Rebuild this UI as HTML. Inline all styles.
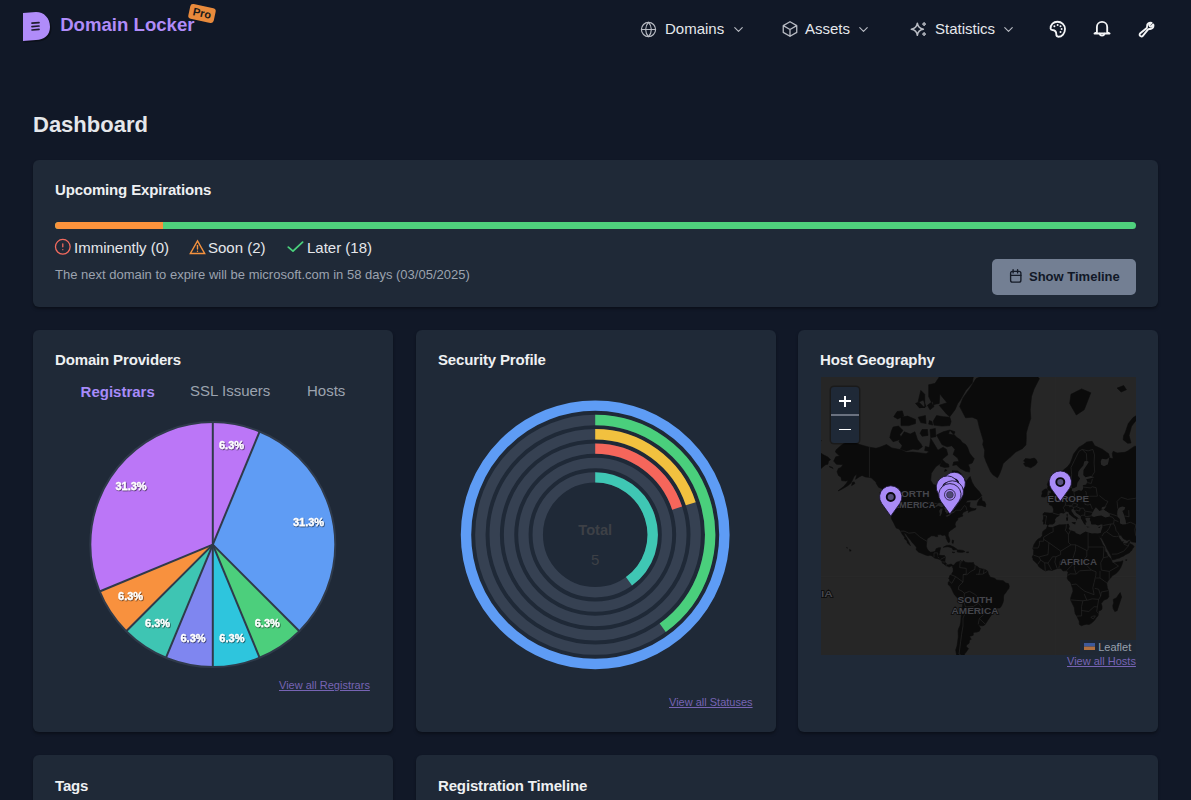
<!DOCTYPE html>
<html><head><meta charset="utf-8">
<style>
*{margin:0;padding:0;box-sizing:border-box}
html,body{width:1191px;height:800px;overflow:hidden;background:#111827;font-family:"Liberation Sans",sans-serif;color:#e5e7eb}
.a{position:absolute;white-space:nowrap}
.card{position:absolute;background:#1f2937;border-radius:6px;box-shadow:0 2px 3px rgba(0,0,0,.35)}
.t{font-size:15px;font-weight:700;color:#eef0f2;line-height:17px;letter-spacing:-.15px}
svg.i{position:absolute;fill:none;stroke:currentColor;stroke-width:2;stroke-linecap:round;stroke-linejoin:round}
.pl{font-size:11px;font-weight:700;fill:#fff;stroke:#fff;stroke-width:.3px;filter:url(#ds);font-family:"Liberation Sans",sans-serif}
.ml{font-size:9.8px;font-weight:700;fill:#44454b;paint-order:stroke;stroke:#0b0b0b;stroke-width:1.5px;font-family:"Liberation Sans",sans-serif}
.link{font-size:11px;color:#7764b4;text-decoration:underline;line-height:13px}
</style></head><body>

<!-- header -->
<svg class="a" style="left:20px;top:8px" width="34" height="36" viewBox="0 0 34 36">
  <path d="M3 5 L16 4 C24 4 30 10 30 19 C30 27 24 32 16 32 L3 33 Z" fill="#000" opacity=".35" transform="translate(1.5,1.5)"/>
  <path d="M3 5 L16 4 C24 4 30 10 30 19 C30 27 24 32 16 32 L3 33 Z" fill="#b08cf9"/>
  <path d="M12 15.2 L19 14.6 M12 18.6 L19 18 M12 22 L19 21.4" stroke="#1f1b2e" stroke-width="1.7" stroke-linecap="round"/>
</svg>
<div class="a" style="left:60.2px;top:13.5px;font-size:18.6px;font-weight:700;color:#b08cf9;line-height:22px">Domain Locker</div>
<div class="a" style="left:189.3px;top:6px;width:26px;height:15px;background:#e98a3c;border-radius:3px;transform:rotate(12deg);font-size:11px;font-weight:700;color:#1a1a1a;line-height:15px;text-align:center">Pro</div>

<div id="nav" style="color:#e5e7eb">
<svg class="i" style="left:639.7px;top:21px;color:#b9bcc4;stroke-width:1.6" width="17" height="17" viewBox="0 0 24 24"><circle cx="12" cy="12" r="10"/><path d="M12 2a14.5 14.5 0 0 0 0 20 14.5 14.5 0 0 0 0-20"/><path d="M2 12h20"/></svg>
<div class="a" style="left:665px;top:20px;font-size:15px;line-height:17px">Domains</div>
<svg class="i" style="left:731px;top:22px;color:#b9bcc4;stroke-width:1.8" width="15" height="15" viewBox="0 0 24 24"><path d="m6 9 6 6 6-6"/></svg>

<svg class="i" style="left:781px;top:20px;color:#b9bcc4;stroke-width:1.7;stroke-linejoin:round" width="18" height="18" viewBox="0 0 24 24"><path d="m21 7.5-9-5.25L3 7.5m18 0-9 5.25m9-5.25v9l-9 5.25M3 7.5l9 5.25M3 7.5v9l9 5.25m0-9v9"/></svg>
<div class="a" style="left:805px;top:20px;font-size:15px;line-height:17px">Assets</div>
<svg class="i" style="left:856px;top:22px;color:#b9bcc4;stroke-width:1.8" width="15" height="15" viewBox="0 0 24 24"><path d="m6 9 6 6 6-6"/></svg>

<svg class="a" style="left:905px;top:15px" width="30" height="28" viewBox="0 0 30 28" fill="none" stroke="#b9bcc4" stroke-width="1.5" stroke-linejoin="round"><path d="M12.35 8.2Q13.1 13.5 18.4 14.25Q13.1 15 12.35 20.3Q11.6 15 6.3 14.25Q11.6 13.5 12.35 8.2Z"/><path d="M19.1 7.3Q19.4 8.8 20.9 9.1Q19.4 9.4 19.1 10.9Q18.8 9.4 17.3 9.1Q18.8 8.8 19.1 7.3Z" fill="#b9bcc4" stroke-width=".9"/><path d="M19.1 17.3Q19.4 18.8 20.9 19.1Q19.4 19.4 19.1 20.9Q18.8 19.4 17.3 19.1Q18.8 18.8 19.1 17.3Z" fill="#b9bcc4" stroke-width=".9"/></svg>
<div class="a" style="left:935px;top:20px;font-size:15px;line-height:17px">Statistics</div>
<svg class="i" style="left:1001px;top:22px;color:#b9bcc4;stroke-width:1.8" width="15" height="15" viewBox="0 0 24 24"><path d="m6 9 6 6 6-6"/></svg>

<svg class="a" style="left:1045px;top:17px" width="25" height="23" viewBox="0 0 25 23" fill="none" stroke="#f3f4f6" stroke-width="1.85" stroke-linejoin="round"><path d="M5.6 11.6C5.4 7.6 8.5 4.7 12.4 4.7C16.7 4.7 20 8 20 12.1C20 16.4 17 19.7 13.3 19.7C11.9 19.7 11.3 18.7 11.3 17.3C11.3 14.6 9.6 13.1 7.5 13C6.4 12.9 5.7 12.4 5.6 11.6Z"/><g fill="#f3f4f6" stroke="none"><circle cx="9.4" cy="9.2" r="1"/><circle cx="12.6" cy="8" r="1"/><circle cx="15.5" cy="9.3" r="1"/><circle cx="16.6" cy="12.1" r="1"/><circle cx="15.5" cy="15" r="1"/></g></svg>
<svg class="a" style="left:1090px;top:17px" width="25" height="23" viewBox="0 0 25 23" fill="none" stroke="#f3f4f6" stroke-width="1.85" stroke-linejoin="round" stroke-linecap="round"><path d="M6.9 15V9.9C6.9 7 9.2 4.9 12.05 4.9C14.9 4.9 17.2 7 17.2 9.9V15L19.6 16.5H4.5Z"/><path d="M9.7 16.7A2.4 2.4 0 0 0 14.4 16.7"/></svg>
<svg class="i" style="left:1138.2px;top:20.8px;color:#f3f4f6;stroke-width:2.6" width="17.1" height="17.1" viewBox="0 0 24 24"><path d="M21.75 6.75a4.5 4.5 0 0 1-4.884 4.484c-1.076-.091-2.264.071-2.950.904l-7.152 8.684a2.548 2.548 0 1 1-3.586-3.586l8.684-7.152c.833-.686.995-1.874.904-2.950a4.5 4.5 0 0 1 6.336-4.486l-3.276 3.276a3.004 3.004 0 0 0 2.250 2.250l3.276-3.276c.256.58.398 1.220.398 1.890Z"/></svg>
</div>

<div class="a" style="left:33px;top:112px;font-size:22px;font-weight:700;color:#e5e7eb;line-height:25px">Dashboard</div>

<!-- card 1 -->
<div class="card" style="left:33px;top:160px;width:1125px;height:147px"></div>
<div class="a t" style="left:55px;top:181px">Upcoming Expirations</div>
<div class="a" style="left:55px;top:221.9px;width:1081px;height:7.5px;border-radius:4px;background:#4fd17d;overflow:hidden"><div style="width:108px;height:7.5px;background:#fb923c"></div></div>

<svg class="i" style="left:53.6px;top:237.9px;color:#f26a5e;stroke-width:1.75" width="17.6" height="17.6" viewBox="0 0 24 24"><circle cx="12" cy="12" r="10"/><line x1="12" x2="12" y1="8" y2="12"/><line x1="12" x2="12.01" y1="16" y2="16"/></svg>
<div class="a" style="left:74px;top:239px;font-size:15px;line-height:17px">Imminently (0)</div>
<svg class="i" style="left:189px;top:239px;color:#f5923e;stroke-width:2;stroke-linejoin:miter" width="17" height="17" viewBox="0 0 24 24"><path d="M12 2.6L22.1 20.4H1.9Z"/><path d="M12 9.2v5"/><path d="M12 17.3h.01"/></svg>
<div class="a" style="left:208px;top:239px;font-size:15px;line-height:17px">Soon (2)</div>
<svg class="a" style="left:280px;top:234px" width="30" height="26" viewBox="0 0 30 26" fill="none" stroke="#4ad07c" stroke-width="1.8" stroke-linecap="round" stroke-linejoin="round"><path d="M8.3 13.1L13 17.1L22.6 8.2"/></svg>
<div class="a" style="left:307px;top:239px;font-size:15px;line-height:17px">Later (18)</div>
<div class="a" style="left:55px;top:267px;font-size:13px;line-height:15px;color:#9ca3af">The next domain to expire will be microsoft.com in 58 days (03/05/2025)</div>

<div class="a" style="left:992px;top:259px;width:144px;height:36px;background:#737f93;border-radius:5px"></div>
<svg class="a" style="left:1003px;top:265px" width="24" height="22" viewBox="0 0 24 22" fill="none" stroke="#151b27" stroke-width="1.35" stroke-linecap="round"><rect x="7.6" y="6.3" width="10.3" height="10.8" rx="1.9"/><path d="M7.6 10.4H17.9M10.1 4.6V7.9M14.6 4.6V7.9"/></svg>
<div class="a" style="left:1029px;top:269px;font-size:13px;font-weight:700;line-height:15px;color:#111827">Show Timeline</div>

<!-- row 2 -->
<div class="card" style="left:33px;top:330px;width:360px;height:402px"></div>
<div class="card" style="left:415.5px;top:330px;width:360px;height:402px"></div>
<div class="card" style="left:798px;top:330px;width:360px;height:402px"></div>

<div class="a t" style="left:55px;top:351px">Domain Providers</div>
<div class="a" style="left:80.6px;top:382.5px;font-size:15px;font-weight:700;color:#a78bfa;line-height:17px">Registrars</div>
<div class="a" style="left:190px;top:382px;font-size:15px;color:#9ca3af;line-height:17px">SSL Issuers</div>
<div class="a" style="left:307px;top:382px;font-size:15px;color:#9ca3af;line-height:17px">Hosts</div>
<svg class="a" style="left:0;top:0" width="400" height="740" viewBox="0 0 400 740"><defs><filter id="ds" x="-20%" y="-30%" width="140%" height="160%"><feDropShadow dx="0.6" dy="0.8" stdDeviation="0.7" flood-color="#000" flood-opacity="0.75"/></filter></defs><path d="M212.80 544.60L212.80 422.10A122.5 122.5 0 0 1 259.68 431.42Z" fill="#bb76f7"/><path d="M212.80 544.60L259.68 431.42A122.5 122.5 0 0 1 299.42 631.22Z" fill="#5f9cf4"/><path d="M212.80 544.60L299.42 631.22A122.5 122.5 0 0 1 259.68 657.78Z" fill="#4ccf7c"/><path d="M212.80 544.60L259.68 657.78A122.5 122.5 0 0 1 212.80 667.10Z" fill="#2ec5dd"/><path d="M212.80 544.60L212.80 667.10A122.5 122.5 0 0 1 165.92 657.78Z" fill="#7f86f0"/><path d="M212.80 544.60L165.92 657.78A122.5 122.5 0 0 1 126.18 631.22Z" fill="#3ec5b3"/><path d="M212.80 544.60L126.18 631.22A122.5 122.5 0 0 1 99.62 591.48Z" fill="#f8913e"/><path d="M212.80 544.60L99.62 591.48A122.5 122.5 0 0 1 212.80 422.10Z" fill="#bb76f7"/><path d="M212.80 544.60L212.80 422.10" stroke="#2f3a4a" stroke-width="2"/><path d="M212.80 544.60L259.68 431.42" stroke="#2f3a4a" stroke-width="2"/><path d="M212.80 544.60L299.42 631.22" stroke="#2f3a4a" stroke-width="2"/><path d="M212.80 544.60L259.68 657.78" stroke="#2f3a4a" stroke-width="2"/><path d="M212.80 544.60L212.80 667.10" stroke="#2f3a4a" stroke-width="2"/><path d="M212.80 544.60L165.92 657.78" stroke="#2f3a4a" stroke-width="2"/><path d="M212.80 544.60L126.18 631.22" stroke="#2f3a4a" stroke-width="2"/><path d="M212.80 544.60L99.62 591.48" stroke="#2f3a4a" stroke-width="2"/><circle cx="212.8" cy="544.6" r="122.5" fill="none" stroke="#2f3a4a" stroke-width="2"/><text x="231.5" y="448.7" text-anchor="middle" class="pl">6.3%</text><text x="308.5" y="526" text-anchor="middle" class="pl">31.3%</text><text x="267.3" y="627" text-anchor="middle" class="pl">6.3%</text><text x="231.9" y="641.8" text-anchor="middle" class="pl">6.3%</text><text x="193" y="641.8" text-anchor="middle" class="pl">6.3%</text><text x="157.6" y="627" text-anchor="middle" class="pl">6.3%</text><text x="130.6" y="599.6" text-anchor="middle" class="pl">6.3%</text><text x="131" y="490.3" text-anchor="middle" class="pl">31.3%</text></svg>
<div class="a link" style="left:279px;top:679px">View all Registrars</div>

<div class="a t" style="left:438px;top:351px">Security Profile</div>
<svg class="a" style="left:0;top:0;font-family:'Liberation Sans',sans-serif" width="800" height="740" viewBox="0 0 800 740"><circle cx="595.2" cy="534.8" r="129.2" fill="none" stroke="#5e9cf5" stroke-width="10.4"/><circle cx="595.2" cy="534.8" r="114.85" fill="none" stroke="#364152" stroke-width="10.4"/><path d="M595.20 419.95A114.85 114.85 0 0 1 662.71 627.72" fill="none" stroke="#4acf7c" stroke-width="10.4"/><circle cx="595.2" cy="534.8" r="100.5" fill="none" stroke="#364152" stroke-width="10.4"/><path d="M595.20 434.30A100.5 100.5 0 0 1 690.78 503.74" fill="none" stroke="#f2c13f" stroke-width="10.4"/><circle cx="595.2" cy="534.8" r="86.15" fill="none" stroke="#364152" stroke-width="10.4"/><path d="M595.20 448.65A86.15 86.15 0 0 1 677.13 508.18" fill="none" stroke="#f6665b" stroke-width="10.4"/><circle cx="595.2" cy="534.8" r="71.8" fill="none" stroke="#364152" stroke-width="10.4"/><circle cx="595.2" cy="534.8" r="57.45" fill="none" stroke="#364152" stroke-width="10.4"/><path d="M595.20 477.35A57.45 57.45 0 0 1 628.97 581.28" fill="none" stroke="#3fc7b4" stroke-width="10.4"/><text x="595.2" y="534.8" text-anchor="middle" style="font-size:14.6px;font-weight:700;fill:#3d4046">Total</text><text x="595.2" y="564.9" text-anchor="middle" style="font-size:15px;fill:#3d4046">5</text></svg>
<div class="a link" style="left:669px;top:695.5px">View all Statuses</div>

<div class="a t" style="left:820px;top:351px">Host Geography</div>
<div class="a" style="left:820.5px;top:377.3px;width:315.5px;height:277.7px;background:#262626;overflow:hidden">
<svg width="315.5" height="277.7" style="position:absolute;left:0;top:0">
<path d="M234.2 0V277.7M0 199.7H315.5" stroke="#2b2b2b" stroke-width=".7" fill="none"/>
<path d="M82.7 39.1L76.7 41.9L72.8 39.7L76.1 34.5L81.3 33.9ZM111.6 48.1L107.7 47.1L108.4 43.5L111.0 44.5ZM105.1 29.6L98.5 30.9L94.5 26.4L102.4 23.0ZM103.7 30.9L103.7 17.3L99.8 13.4L97.2 24.4ZM109.0 32.7L106.4 28.3L111.6 24.4L113.0 29.6ZM132.7 58.0L127.5 57.1L128.8 53.0L134.0 54.8ZM126.1 93.4L123.5 94.5L124.2 92.3ZM12.7 84.1L14.8 79.8L18.7 79.1L14.4 75.0L15.2 72.8L20.7 67.9L28.0 63.5L33.9 65.5L38.5 67.5L48.4 70.2L55.0 71.3L58.9 70.2L65.5 67.5L70.8 70.9L80.0 72.8L85.3 75.3L91.9 75.0L97.2 75.7L105.1 76.7L107.7 75.0L109.7 61.4L113.0 66.7L116.9 73.2L122.2 70.2L125.5 72.4L126.8 77.8L121.5 82.1L119.6 86.6L114.9 89.6L110.3 96.2L109.7 103.4L112.3 107.6L117.6 108.8L122.2 111.9L125.7 112.8L126.1 117.0L128.1 120.9L129.8 120.3L130.4 113.7L132.5 110.7L132.1 104.6L132.1 98.9L131.1 93.7L136.7 94.0L140.6 97.0L142.6 101.6L145.2 104.6L147.9 100.8L149.2 99.5L150.9 104.9L153.2 109.0L155.8 112.1L158.4 114.8L160.7 118.6L159.1 120.5L155.1 123.0L149.2 123.0L146.6 123.4L142.6 127.8L141.3 129.4L143.9 125.8L149.2 125.4L148.8 127.4L148.5 129.4L149.9 130.9L153.8 131.8L155.1 131.3L154.5 132.8L149.9 134.1L147.2 135.4L147.9 133.5L145.9 133.5L143.9 134.6L142.0 135.4L141.2 137.5L142.0 139.0L140.0 139.7L136.7 141.1L136.7 143.0L134.7 144.7L134.0 147.2L134.7 149.9L133.0 150.9L131.4 152.3L129.4 153.6L127.5 155.5L127.1 158.2L128.1 160.8L128.8 163.0L128.4 165.2L127.2 165.4L126.4 163.8L125.2 161.5L125.1 159.4L123.5 158.1L121.5 158.5L119.6 157.6L116.3 157.8L116.7 159.6L114.9 159.6L113.0 158.8L110.3 158.8L108.4 160.2L106.1 161.8L105.7 164.9L105.3 169.3L106.1 171.7L107.7 174.1L109.7 175.3L113.0 174.7L114.3 174.2L115.1 171.7L117.6 170.8L119.6 170.7L118.9 173.5L118.5 175.9L117.8 178.1L120.9 178.5L123.5 178.6L124.4 179.7L124.0 183.1L123.9 185.1L125.1 186.5L126.8 188.1L128.8 187.4L130.1 187.1L131.9 188.3L132.2 189.4L130.9 188.9L129.0 189.4L128.1 190.1L126.8 189.3L124.8 188.7L122.6 186.7L121.1 185.9L121.3 184.8L119.2 182.6L116.3 181.7L113.6 181.1L111.0 178.9L109.0 178.2L107.0 178.7L104.4 177.9L101.1 176.5L97.8 175.2L95.2 172.8L95.4 170.3L93.9 168.3L91.2 165.4L89.9 163.5L87.3 160.5L85.3 157.5L82.9 155.5L83.7 157.9L85.6 160.8L87.3 163.9L88.6 166.8L89.4 168.7L88.6 167.8L86.3 165.9L86.0 163.8L83.6 162.0L83.7 160.3L81.6 157.8L80.3 155.5L79.8 154.2L78.0 152.0L75.3 151.1L73.7 148.0L72.8 146.0L71.1 143.0L70.4 141.4L70.0 136.8L70.8 130.9L69.9 126.6L72.1 125.4L69.5 123.2L66.2 121.3L64.9 118.1L62.2 113.7L60.9 111.4L58.3 107.8L55.6 105.4L53.7 104.1L50.4 100.8L47.7 100.3L44.4 100.0L41.1 98.4L38.5 99.7L34.6 102.3L35.9 97.0L33.2 99.2L31.3 103.4L29.9 106.1L26.7 108.8L23.4 110.7L20.1 112.6L17.0 113.9L19.4 112.1L22.7 109.5L25.3 106.4L27.3 103.4L24.7 104.1L20.7 103.6L20.1 100.3L17.4 98.4L16.1 94.8L17.4 91.4L20.1 90.5L22.0 87.5L18.7 87.5L15.4 87.2L12.7 84.1ZM176.5 100.8L172.3 98.1L169.6 94.8L167.3 89.6L165.0 84.4L163.3 79.5L163.7 73.2L161.7 67.5L162.4 63.9L160.4 57.1L158.4 50.6L156.5 42.4L151.2 40.2L144.6 40.8L138.7 29.6L142.0 20.9L148.5 11.9L155.1 1.6L168.3 -4.1L184.1 -16.9L205.2 -11.3L218.4 1.6L213.1 11.9L210.5 19.5L209.2 32.7L209.8 41.3L207.2 49.1L205.2 56.2L205.2 62.7L204.9 67.9L201.3 71.7L194.7 75.0L189.4 80.1L184.8 84.1L182.1 86.6L180.8 91.1L178.9 96.2L177.5 98.9ZM204.5 89.3L202.6 86.6L204.5 85.3L202.6 84.1L204.5 81.5L209.2 82.1L213.1 81.1L215.1 82.5L216.3 85.3L214.4 88.1L209.8 90.8L206.5 89.6ZM128.8 53.0L122.2 54.8L115.6 58.0L120.9 67.5L126.1 69.8L130.8 68.7L134.0 72.4L132.1 77.4L136.7 81.1L138.0 84.4L132.7 85.0L131.7 88.4L135.4 87.8L139.3 91.4L144.6 94.3L148.5 95.1L148.8 91.4L147.2 87.5L151.2 86.0L153.2 81.8L151.2 79.5L148.5 76.0L146.6 70.6L144.6 67.5L141.3 65.5L139.3 62.7L136.0 60.6L133.4 58.0L131.4 56.2ZM152.5 -1.2L142.0 -11.3L122.2 -6.0L114.3 6.1L118.2 15.8L120.9 19.5L126.1 25.7L118.2 28.3L125.5 36.9L128.8 39.7L134.0 32.7L136.7 26.4L139.3 23.0L144.6 13.4L151.2 6.1ZM115.6 6.1L107.7 7.8L107.7 19.5L111.6 27.7L118.2 26.4L118.9 15.8ZM128.8 48.6L120.9 49.1L113.0 48.1L112.3 44.0L115.6 38.6L122.2 39.7L128.8 40.2L130.1 44.5ZM101.4 69.8L97.2 72.8L91.9 72.1L85.3 73.9L79.4 72.1L81.3 68.7L78.0 64.7L80.0 59.7L83.3 54.8L89.2 57.1L93.9 54.8L96.5 62.7L99.8 66.7ZM80.7 61.8L76.1 63.5L72.1 64.7L68.8 60.6L70.4 53.9L72.1 50.1L77.4 49.1L82.0 53.4L78.7 57.5ZM94.5 46.6L87.9 48.6L80.0 48.6L80.0 40.2L86.6 39.1L94.5 42.4ZM107.0 58.4L101.1 59.3L99.1 56.2L101.1 52.5L106.4 52.5ZM114.9 59.7L109.7 60.6L109.0 52.5L114.3 51.5ZM105.1 46.6L99.8 45.6L97.2 40.2L104.4 38.6ZM107.7 74.3L103.7 73.5L104.4 69.4L108.4 70.6ZM128.1 89.9L123.5 90.5L118.9 89.0L120.9 84.4L121.5 82.8L124.8 86.0L127.5 87.2ZM156.1 128.2L160.4 128.4L164.4 129.9L164.8 127.4L163.7 124.8L161.1 123.8L160.7 120.3L158.4 122.2L156.5 126.0ZM71.7 126.8L68.8 125.6L65.0 121.9L68.2 122.4L70.8 124.8ZM61.6 119.2L58.9 115.9L59.6 114.4L61.6 117.0ZM60.5 111.4L57.6 110.2L55.0 105.9L56.3 104.1L59.6 106.6ZM33.9 106.6L30.6 108.6L31.3 105.4L33.2 104.9ZM8.2 89.6L12.2 91.4L10.8 90.2ZM122.2 170.3L125.5 168.4L128.8 168.3L132.7 170.0L136.4 172.5L132.1 172.9L130.8 170.7L126.8 169.7L124.2 170.0ZM136.2 173.1L138.3 172.9L142.0 173.4L144.1 174.7L141.3 175.3L138.7 175.3L136.2 175.0ZM131.0 175.2L133.8 175.4L132.7 175.7ZM145.6 174.9L147.8 175.0L147.2 175.6L145.6 175.6ZM131.4 163.0L132.7 163.5L132.1 166.4L131.0 165.7ZM28.6 172.5L30.2 173.5L28.9 174.3ZM25.6 170.5L26.5 171.0L25.9 171.1ZM-16.2 94.8L-5.6 94.0L-1.7 93.4L1.0 90.5L4.9 87.5L6.9 87.2L7.5 84.1L9.5 82.8L6.9 80.1L2.3 77.8L-3.0 74.3L-9.6 70.6L-16.2 68.7ZM-5.6 62.7L-1.7 64.7L0.3 63.9L-1.0 62.3ZM132.2 188.3L133.4 187.8L134.6 185.9L136.0 185.0L138.0 184.7L139.3 183.4L140.4 184.0L139.8 185.4L140.2 187.1L140.6 185.4L141.7 184.6L142.2 183.5L144.2 185.2L147.2 185.7L150.5 185.7L152.5 185.5L152.8 187.0L154.1 188.5L156.5 189.4L158.0 191.1L161.1 191.9L163.0 192.2L165.0 193.1L166.7 194.2L167.4 197.1L168.3 198.4L169.0 200.0L170.9 200.6L173.6 201.3L175.6 203.0L178.9 203.4L182.1 203.7L184.8 206.0L187.4 206.6L188.3 209.2L187.8 211.6L186.1 213.6L184.4 216.3L182.9 217.7L182.5 220.4L182.5 223.4L181.8 225.9L180.4 229.1L178.9 230.9L175.3 231.3L172.9 232.3L170.7 234.5L170.2 238.2L168.7 240.4L167.0 243.0L165.0 246.1L163.7 247.9L161.9 248.8L159.7 248.7L157.4 247.7L158.8 250.3L159.5 251.6L158.3 254.2L155.8 255.1L152.2 255.4L152.2 258.2L150.1 259.0L148.5 259.0L149.5 261.3L150.3 262.2L148.5 263.1L148.1 266.2L145.6 268.1L145.2 269.7L147.5 271.6L145.2 275.0L143.5 277.0L143.0 280.2L144.1 281.1L143.9 284.6L146.6 286.8L142.0 288.0L136.7 284.6L136.0 280.2L134.7 273.0L136.0 269.1L136.7 264.4L137.3 259.9L137.1 253.9L137.7 251.4L138.9 249.0L139.8 245.0L140.0 241.2L140.4 238.2L141.2 234.5L141.4 230.9L141.7 227.3L141.6 224.2L138.7 222.2L136.0 220.4L133.7 218.1L132.3 215.6L130.8 212.3L129.4 209.6L127.2 207.6L127.2 205.6L128.4 204.1L128.8 202.7L127.7 201.7L128.5 199.7L128.8 198.6L130.4 197.7L131.1 196.1L132.2 194.4L132.2 191.5L131.5 190.2ZM333.0 72.4L321.2 68.7L313.3 69.4L306.7 73.9L304.0 75.3L296.1 76.0L292.2 74.3L291.3 76.7L292.2 81.8L288.2 80.8L286.9 86.9L283.0 89.3L280.1 87.8L280.3 82.1L284.9 82.5L288.5 80.1L287.6 76.7L281.6 72.4L277.7 70.6L273.7 68.7L271.1 64.3L265.8 65.1L261.9 67.9L257.9 70.2L255.3 73.5L252.6 77.1L250.9 82.1L249.4 86.0L246.7 89.6L243.4 92.3L240.8 94.8L240.8 98.9L241.2 102.1L242.1 104.9L244.1 105.4L245.4 104.9L247.4 102.9L248.4 101.3L249.4 104.6L250.0 107.1L251.1 110.2L250.8 111.4L249.4 111.2L250.0 113.7L248.6 109.3L247.8 106.1L245.4 107.6L244.9 110.2L245.5 112.1L245.5 115.3L243.4 115.9L240.8 116.6L240.1 118.6L238.8 120.3L237.4 121.1L236.3 121.7L235.8 123.6L234.2 124.4L232.6 124.6L232.1 124.0L232.1 126.0L230.2 125.8L228.0 126.4L228.5 127.8L230.9 128.8L231.8 130.3L232.6 132.2L232.2 135.9L228.9 136.1L225.0 135.7L223.4 135.5L221.9 137.0L222.6 139.5L222.5 142.1L221.7 144.1L222.6 145.2L222.5 147.2L224.3 146.8L225.9 147.5L226.8 148.8L226.3 149.1L225.6 151.2L224.3 152.5L221.9 154.4L221.3 156.7L221.4 158.5L219.7 160.8L217.1 162.0L215.1 164.2L212.9 167.8L211.8 171.4L212.7 173.5L212.5 177.6L211.1 180.1L212.1 181.7L212.1 183.1L213.8 184.4L215.1 185.8L216.7 187.4L217.7 189.4L219.3 190.7L221.7 192.4L224.3 193.9L227.6 193.0L230.9 193.4L234.2 192.3L236.2 191.5L238.2 191.2L240.1 191.4L242.1 194.0L244.1 193.8L245.8 193.8L247.1 195.1L246.7 197.3L246.5 199.7L246.1 201.0L247.4 203.4L249.4 205.0L250.4 207.4L250.7 208.9L251.7 211.6L252.0 214.3L250.7 217.7L249.7 221.1L249.7 223.1L250.7 225.2L252.0 228.0L253.3 230.6L253.7 233.7L254.2 236.7L255.9 239.1L257.1 241.9L258.3 244.2L258.3 246.6L258.6 247.7L260.6 248.7L262.5 247.9L265.2 247.2L268.1 247.4L269.8 246.6L271.8 245.0L273.7 243.0L275.7 240.1L277.0 238.9L277.6 235.2L277.4 234.2L280.3 233.0L281.0 231.6L281.0 229.1L280.1 226.6L281.4 224.9L283.0 223.1L286.3 221.8L287.8 219.7L287.6 215.6L287.4 213.6L286.3 210.9L286.0 208.3L285.6 206.3L286.8 204.3L288.0 202.3L289.3 201.3L291.5 198.6L294.2 197.1L296.1 195.5L298.1 193.1L299.7 190.5L301.1 187.1L301.8 184.4L301.7 183.8L299.4 184.7L296.1 185.0L293.5 185.7L291.9 185.7L291.1 184.3L290.5 183.0L289.3 181.3L287.7 179.6L286.5 178.5L285.7 175.9L284.1 174.2L283.9 171.4L283.4 169.7L281.6 167.4L281.0 165.9L279.7 163.0L278.9 161.7L277.4 158.8L277.0 158.2L278.0 159.0L279.1 161.1L279.5 160.8L280.1 159.1L280.5 161.1L282.3 164.1L283.5 166.5L285.3 170.0L286.1 172.1L287.7 174.5L289.0 177.0L290.1 179.0L290.6 181.1L291.3 182.7L293.5 182.6L296.1 181.6L298.4 181.1L300.1 180.0L302.7 178.9L304.0 177.9L306.9 176.5L308.5 175.7L309.3 174.5L310.4 173.9L311.3 172.1L312.3 170.8L313.0 169.4L311.4 167.7L309.7 167.2L308.5 165.8L308.4 163.8L307.5 164.9L306.0 166.7L304.0 166.8L302.2 166.8L301.8 165.7L302.2 164.2L301.3 165.2L300.4 164.5L299.6 162.9L298.2 161.2L297.5 159.3L297.5 158.2L298.8 158.1L300.4 158.5L301.1 160.0L302.1 161.4L303.5 162.3L306.0 163.5L308.0 162.7L309.0 162.6L309.8 164.5L311.9 165.1L315.4 165.4L321.2 165.1L333.0 165.7ZM226.7 123.4L230.2 122.4L234.9 121.7L236.0 120.9L236.4 117.9L234.6 116.2L233.5 113.7L232.2 111.4L231.6 110.2L230.5 109.5L231.8 106.6L229.6 106.1L230.0 103.9L227.6 103.9L226.3 107.4L227.0 109.5L226.3 111.6L227.6 113.2L230.0 113.7L230.2 116.2L228.3 116.4L228.9 118.8L227.3 119.8L228.9 120.3L230.0 120.7ZM220.6 119.8L223.7 120.1L226.0 118.8L226.3 115.3L226.8 113.5L225.9 112.1L224.3 111.9L223.0 112.8L221.0 114.4L221.3 116.6L220.6 118.6ZM248.7 26.4L255.3 38.0L263.2 32.7L269.8 15.8L260.6 11.9L250.0 17.3ZM302.1 62.7L306.7 66.3L310.0 65.9L308.0 58.4L310.6 49.1L315.9 42.4L325.1 36.9L319.9 35.7L311.9 40.8L307.3 46.6L304.0 56.2L302.7 58.4ZM296.1 11.1L300.1 15.0L305.4 12.7L302.7 8.6ZM299.2 215.6L300.6 220.1L299.8 222.4L297.5 229.4L296.1 233.7L293.8 234.5L292.2 231.6L291.8 228.7L292.7 225.9L292.2 222.4L295.5 220.8L297.5 217.8ZM304.4 183.0L306.0 182.8L305.6 183.4Z" fill="#0b0b0b" stroke="#0b0b0b" stroke-width=".6" stroke-linejoin="round"/>
<path d="M227.0 148.8L228.3 147.6L231.6 147.6L233.5 146.2L234.5 144.1L233.8 143.0L235.4 140.4L238.4 138.8L238.3 136.8L240.1 136.1L242.8 136.6L245.4 134.5L247.6 135.2L248.0 137.0L250.3 139.0L252.6 140.7L254.9 142.1L255.3 144.1L255.9 142.6L256.9 141.2L258.6 141.9L256.6 140.4L253.3 138.3L250.4 133.9L250.5 132.4L252.1 131.7L253.3 132.8L255.3 135.9L259.8 139.0L259.9 141.4L261.9 144.7L263.2 147.2L264.8 148.0L264.5 145.5L265.8 145.2L264.2 141.4L265.8 140.7L268.5 140.7L269.3 141.6L268.7 143.1L269.8 144.7L270.2 147.2L271.8 147.6L274.5 147.6L277.0 148.6L279.7 147.5L281.6 147.6L281.4 150.4L280.3 153.6L279.7 155.9L276.6 156.4L273.7 156.2L271.1 156.5L267.1 155.6L264.5 154.4L260.6 156.8L259.2 157.8L254.6 156.1L254.2 154.7L251.3 153.7L249.4 153.3L247.6 152.0L248.7 149.6L247.8 147.3L247.1 146.7L244.7 147.3L240.8 147.5L238.2 147.5L234.2 149.1L231.3 150.2L227.6 150.1ZM270.4 137.7L271.4 139.5L273.1 140.0L276.4 139.0L280.3 138.6L284.3 140.4L288.9 139.5L289.0 137.5L286.3 135.0L283.6 133.5L282.3 132.6L280.3 133.2L278.3 134.1L277.0 132.2L274.8 130.3L273.2 132.6L271.9 135.0ZM280.3 132.6L283.0 132.6L285.6 129.0L281.0 130.3ZM296.1 136.8L296.8 140.0L298.8 142.1L299.0 144.7L298.8 146.2L301.4 147.5L305.2 147.2L304.7 143.5L303.8 140.7L303.6 139.0L301.4 134.1L303.4 132.8L304.3 130.3L301.4 129.4L298.8 130.3L296.8 132.2L296.4 134.3ZM250.7 113.7L253.3 115.0L257.9 113.0L260.3 113.9L262.1 112.1L261.9 108.3L265.2 107.4L266.4 104.6L265.2 102.3L268.5 101.6L273.5 100.3L269.8 98.9L264.5 100.3L262.3 98.1L262.5 93.1L265.2 89.0L267.8 85.0L265.8 83.4L263.2 84.4L262.3 88.4L259.2 92.0L257.3 94.8L256.9 98.7L259.1 101.6L256.3 105.9L255.9 109.5L253.3 110.9L251.3 111.4L251.1 111.2ZM280.1 87.5L283.0 89.3L286.9 87.2L288.2 81.1L285.6 82.5L281.0 81.8L279.7 84.4ZM112.8 129.9L116.3 127.4L117.8 125.8L120.9 126.0L122.5 129.4L120.2 130.3L117.6 128.8L114.9 130.1ZM118.5 139.1L119.3 139.3L120.6 136.8L121.5 132.2L122.5 131.7L119.6 131.5L118.2 134.1L118.9 136.8ZM122.8 131.5L124.2 131.1L127.5 131.7L128.8 133.9L126.5 136.5L125.5 136.8L125.1 135.0L124.2 135.0L124.2 133.0ZM124.3 139.1L127.5 137.5L130.1 137.0L129.0 138.3L126.1 139.7ZM129.0 136.3L132.7 135.2L133.8 135.7L130.1 136.5Z" fill="#262626"/>
<path d="M250.5 145.3L254.8 145.0L254.1 147.6L251.3 146.3ZM245.0 140.4L247.1 140.2L246.9 143.8L245.4 143.8ZM245.5 137.2L246.7 136.8L246.6 139.7L245.8 139.3ZM265.2 149.6L268.9 149.9L266.5 150.6ZM276.8 150.4L279.8 149.3L278.6 151.1Z" fill="#0b0b0b"/>
<path d="M48.4 100.3L48.4 70.2M72.1 125.4L109.0 125.4L116.9 127.0L122.8 130.3L125.6 132.8L130.1 136.5L135.4 133.2L140.0 133.2L143.3 128.6L144.9 129.4L145.9 133.2M79.9 154.2L83.1 154.1L87.9 156.2L93.9 155.5L98.5 159.7L103.1 162.7L106.1 164.3M232.0 150.4L232.2 154.8L229.6 155.9L222.7 160.2L222.7 162.3M222.7 161.7L222.7 164.2L218.4 164.2L218.4 167.8L217.1 171.0L211.8 171.0M222.7 162.3L227.9 165.7L227.0 177.6L219.0 179.7L218.1 180.1L212.5 178.1M227.9 165.7L239.7 174.1L250.0 167.8M245.4 147.2L245.1 151.2L244.1 153.3L246.1 155.2L247.4 157.5L247.6 165.7L250.0 167.8M249.4 153.4L247.4 157.5M267.1 155.6L267.1 170.0L283.0 170.0M267.1 170.0L267.1 172.8L265.8 173.5L265.8 179.0L263.2 182.4L263.9 185.8L265.8 188.5L270.4 193.1M265.8 173.5L254.6 167.8L250.0 167.8M254.6 167.8L254.6 172.8L252.0 181.1L253.3 183.1L253.3 191.8L255.3 197.1L258.6 193.8L270.4 193.1M239.7 174.1L239.7 177.6L234.9 179.8L231.6 179.7L227.0 186.1L223.7 185.8L219.7 183.1L218.1 180.1M237.8 191.2L238.8 186.5L239.2 184.2L253.3 181.7M253.3 183.1L250.7 188.5L245.7 193.6M227.0 186.1L230.5 193.0M234.9 179.8L233.9 185.1L236.2 191.5M223.7 185.8L224.3 193.9M219.7 183.1L216.7 187.4M246.7 198.4L249.1 196.8L255.3 197.1M250.7 207.6L255.3 207.0L258.6 210.3L263.9 214.3L265.8 215.0L273.1 217.7L271.8 210.9L273.1 205.6L274.8 198.4L275.1 194.8L270.4 193.1M283.0 170.0L282.3 180.7L279.7 185.8L280.3 193.1L288.2 194.4L288.2 201.9M288.2 194.4L297.5 189.1L290.9 184.4M282.3 180.7L287.2 179.7M279.0 193.8L279.0 201.0L283.6 204.3L285.9 205.9M274.8 201.0L279.0 201.0M287.4 213.6L280.3 215.0L279.7 219.0L277.7 222.4L276.4 229.9L275.7 234.5L277.6 236.4M273.7 211.3L277.7 212.3L279.7 219.0M249.7 222.9L261.2 223.8L267.1 223.1L271.1 221.8L277.7 222.4M263.2 217.0L265.8 223.1M255.9 239.1L260.6 238.9L260.6 229.4L261.9 223.8M260.6 233.5L267.8 234.5L273.1 229.7L276.4 229.9M269.8 240.4L272.4 241.9L274.4 238.9L271.8 239.2L269.8 240.4M139.3 183.8L138.7 190.5L145.2 191.4L145.2 197.1L142.2 197.5L142.0 205.0L138.0 208.9L137.3 212.3L141.3 214.3L143.3 216.3M130.1 197.7L134.7 199.7L142.0 205.0M128.4 204.2L130.8 206.3L134.7 199.7M154.2 188.5L153.8 192.4L149.9 194.4L145.9 197.7L142.2 197.5M159.1 191.8L157.8 197.7M163.0 192.2L162.4 196.7M155.1 197.3L161.7 197.1L166.2 194.4M143.3 216.3L143.3 220.4L142.6 223.1L141.6 224.2M143.3 216.3L148.5 214.3L154.5 217.7L157.8 221.8L157.8 225.9L152.5 229.4L144.6 230.1L143.9 228.0L142.6 223.1M151.8 229.7L153.8 232.0L157.1 237.1L162.4 234.5L161.7 231.6L157.8 226.3M162.4 234.5L163.3 237.0L158.3 241.5L164.0 246.9M158.3 241.5L157.2 247.4M144.6 230.1L143.9 236.7L142.0 241.2L142.0 249.0L140.6 257.3L139.7 264.4L138.7 272.0L138.0 277.0L143.3 280.2M113.0 180.4L113.0 175.9L116.7 175.9L116.7 178.5M116.7 179.7L118.0 181.3M124.6 179.7L119.6 182.4M123.9 185.1L121.3 184.8M125.0 189.0L125.4 187.1M222.6 138.6L225.6 139.0L225.1 141.8L224.6 144.8L224.4 146.8M231.8 136.1L238.4 137.9M237.5 121.1L240.1 123.4L242.4 124.4L245.0 125.4L244.2 128.2L242.1 130.9L243.4 132.2L244.1 135.4M238.7 120.5L242.1 121.7L243.4 118.8L243.7 116.4M245.5 112.8L247.2 113.0M252.9 115.0L253.6 119.2L254.0 121.3L250.0 122.8L252.4 125.8L251.3 128.4L246.9 128.4L244.2 128.2M254.0 121.3L259.0 123.6L264.1 125.4M252.4 125.8L256.6 127.4L255.5 129.6L252.6 130.3L250.3 129.4L248.0 129.7M252.3 132.0L252.6 130.3M264.2 113.9L265.2 115.0L265.3 119.2L265.8 122.4L264.1 125.4L263.9 127.4L267.0 128.0L269.3 127.0L271.4 132.2M255.5 129.6L259.2 131.3L262.5 131.1L263.9 134.1L271.8 135.4M263.9 134.6L263.7 138.1L261.2 138.3L259.8 139.0M263.7 138.1L264.4 139.8L268.9 139.1L271.1 138.6M259.2 131.3L258.6 134.1L255.3 133.2L254.0 134.1M288.9 139.5L291.5 140.2L293.2 142.6L292.6 146.8L289.9 147.0L282.3 148.5M289.9 147.0L288.2 151.2L285.6 154.7L283.0 155.9L281.0 159.0M285.6 154.8L292.2 159.4L295.5 159.7L297.5 159.0M292.6 146.8L294.2 149.6L295.1 153.6L297.2 155.9L298.1 158.2M290.9 177.2L296.1 177.0L302.7 174.2L307.3 169.0L308.3 165.9M302.7 167.1L307.3 169.0M278.3 118.6L284.3 123.4L286.9 124.4L284.5 129.0M265.3 119.2L276.4 119.2L275.1 110.7L271.4 109.8L269.3 110.9L262.0 110.0M266.2 105.6L270.3 106.4L271.4 101.8M271.1 98.9L273.7 94.8L273.1 86.0L273.5 77.8L271.8 72.4M250.0 102.9L250.7 97.6L250.0 90.5L253.3 83.7L257.9 74.3L261.2 72.4M265.8 83.4L265.4 76.7L261.2 72.4L267.1 73.9L271.8 72.4M283.0 133.2L286.9 135.9L295.5 138.8L298.1 139.5M297.5 144.7L293.5 143.0M296.8 131.7L296.1 124.4L300.1 120.3L306.7 122.4L314.6 121.3L321.2 113.7M307.7 133.2L308.0 139.8L304.0 139.0M305.2 146.7L309.3 145.2L314.8 147.8L313.9 152.8L314.6 158.2L315.9 160.5L315.4 165.4" fill="none" stroke="#2a2a2a" stroke-width=".6"/>
<text x="72.8" y="119.8" textLength="35.6" lengthAdjust="spacingAndGlyphs" class="ml">NORTH</text><text x="71.5" y="131.0" textLength="42.8" lengthAdjust="spacingAndGlyphs" class="ml">AMERICA</text><text x="136.5" y="226.2" textLength="35.0" lengthAdjust="spacingAndGlyphs" class="ml">SOUTH</text><text x="130.5" y="237.2" textLength="46.9" lengthAdjust="spacingAndGlyphs" class="ml">AMERICA</text><text x="226.6" y="125.3" textLength="41.5" lengthAdjust="spacingAndGlyphs" class="ml">EUROPE</text><text x="239.0" y="188.3" textLength="37.0" lengthAdjust="spacingAndGlyphs" class="ml">AFRICA</text><text x="-7.9" y="220.0" textLength="19.6" lengthAdjust="spacingAndGlyphs" class="ml">SIA</text><path d="M133.20 125.60L124.10 112.93A11.2 11.2 0 1 1 142.30 112.93Z" fill="#a98bf7" stroke="#1a1530" stroke-width=".9"/><circle cx="133.20" cy="106.40" r="4" fill="#57517f" stroke="#0a0910" stroke-width="1.9"/><path d="M126.40 129.30L117.30 116.63A11.2 11.2 0 1 1 135.50 116.63Z" fill="#a98bf7" stroke="#1a1530" stroke-width=".9"/><circle cx="126.40" cy="110.10" r="4" fill="#57517f" stroke="#0a0910" stroke-width="1.9"/><path d="M131.30 134.20L122.20 121.53A11.2 11.2 0 1 1 140.40 121.53Z" fill="#a98bf7" stroke="#1a1530" stroke-width=".9"/><circle cx="131.30" cy="115.00" r="4" fill="#57517f" stroke="#0a0910" stroke-width="1.9"/><path d="M128.90 137.00L119.80 124.33A11.2 11.2 0 1 1 138.00 124.33Z" fill="#a98bf7" stroke="#1a1530" stroke-width=".9"/><circle cx="128.90" cy="117.80" r="5.4" fill="none" stroke="#2c2545" stroke-width=".9"/><circle cx="128.90" cy="117.80" r="3.4" fill="#4f4a74" stroke="#2c2545" stroke-width=".6"/><path d="M69.75 139.15L60.65 126.48A11.2 11.2 0 1 1 78.85 126.48Z" fill="#a98bf7" stroke="#1a1530" stroke-width=".9"/><circle cx="69.75" cy="119.95" r="4" fill="#57517f" stroke="#0a0910" stroke-width="1.9"/><path d="M239.30 124.30L230.20 111.63A11.2 11.2 0 1 1 248.40 111.63Z" fill="#a98bf7" stroke="#1a1530" stroke-width=".9"/><circle cx="239.30" cy="105.10" r="4" fill="#57517f" stroke="#0a0910" stroke-width="1.9"/>
</svg>
</div><div class="a" style="left:830.8px;top:386.8px;width:28.2px;height:56px;background:#1f2937;border-radius:3px;box-shadow:0 0 0 1.5px rgba(0,0,0,.3)"></div>
<div class="a" style="left:830.8px;top:413.8px;width:28.2px;height:2.2px;background:#6b7280"></div>
<div class="a" style="left:838.8px;top:400.4px;width:12.2px;height:2.1px;background:#fff"></div>
<div class="a" style="left:843.9px;top:395.8px;width:2.1px;height:11.2px;background:#fff"></div>
<div class="a" style="left:838.8px;top:428.5px;width:12.2px;height:1.9px;background:#fff"></div>
<div class="a" style="left:1080px;top:640px;width:56px;height:14.8px;background:rgba(31,41,55,.85)"></div>
<svg class="a" style="left:1084.2px;top:643px" width="11" height="7.2" viewBox="0 0 11 7.2"><rect width="11" height="3.6" fill="#3d5a9c"/><rect y="3.6" width="11" height="3.6" fill="#b07040"/></svg>
<div class="a" style="left:1098.2px;top:640.5px;font-size:11px;line-height:13px;color:#97a0ad">Leaflet</div>

<div class="a link" style="left:1067px;top:655px">View all Hosts</div>

<!-- row 3 -->
<div class="card" style="left:33px;top:754.5px;width:360px;height:100px"></div>
<div class="card" style="left:415.5px;top:754.5px;width:742.5px;height:100px"></div>
<div class="a t" style="left:55px;top:777px">Tags</div>
<div class="a t" style="left:438px;top:777px">Registration Timeline</div>

</body></html>
